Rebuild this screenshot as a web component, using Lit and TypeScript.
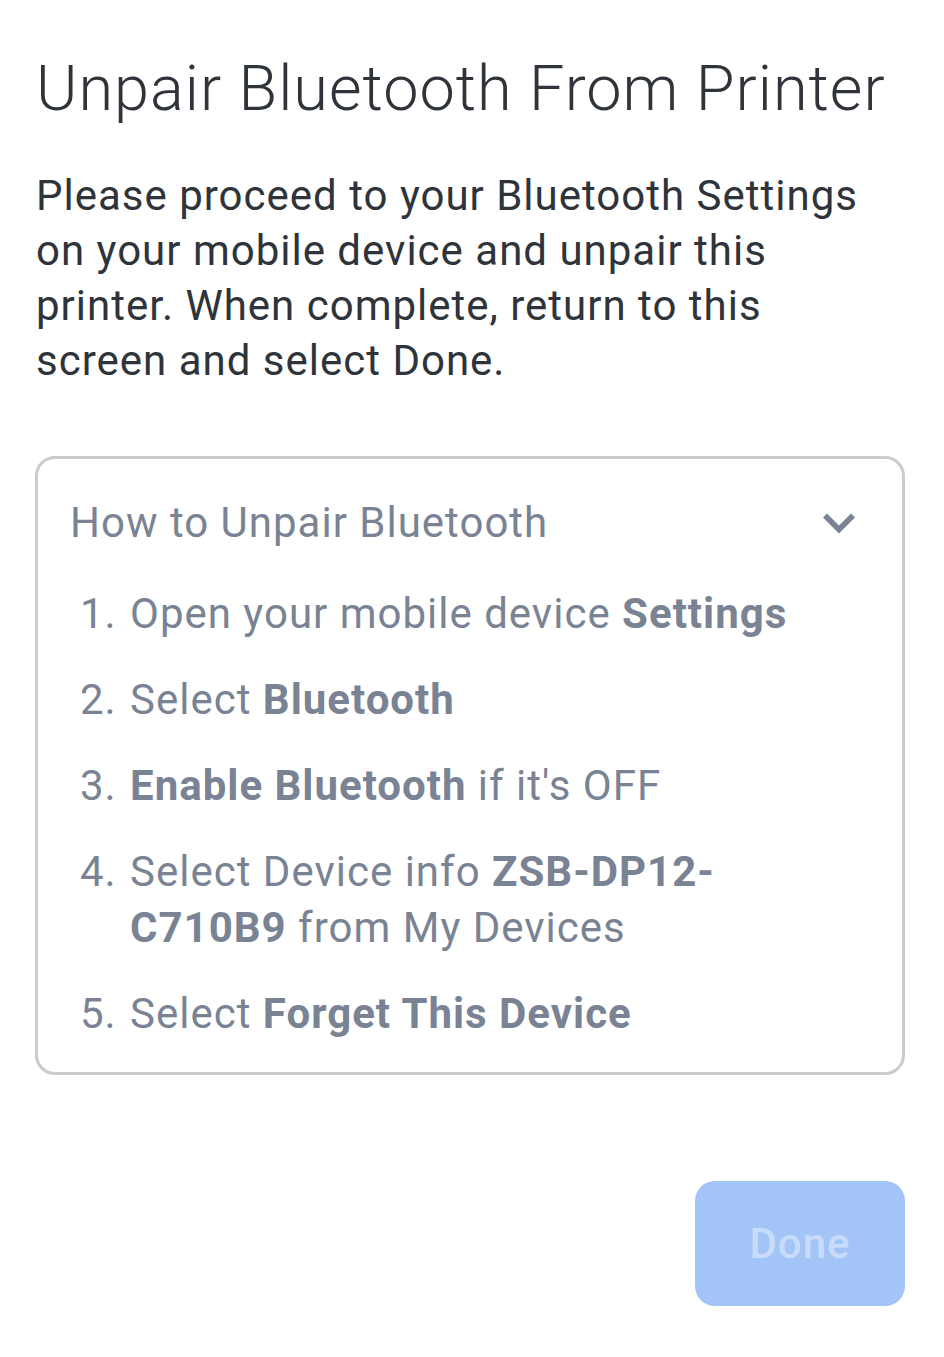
import { LitElement, html, css } from "lit";
import { customElement, state } from "lit/decorators.js";

@customElement("app-root")
export class AppRoot extends LitElement {
  @state() private open = true;

  static styles = css`
    :host {
      display: block;
      box-sizing: border-box;
      min-height: 100vh;
      padding: 56px 39px 50px 35px;
      background: #fff;
      color: #2f333a;
      font-family: Roboto, "Liberation Sans", sans-serif;
      font-size: 42px;
      line-height: 55px;
      letter-spacing: 1px;
    }
    h1 {
      margin: 0 0 46px;
      padding-left: 1px;
      font-size: 63px;
      line-height: 66px;
      font-weight: 300;
    }
    p {
      margin: 0 0 68px;
      padding: 0 16px 0 1px;
    }
    .card {
      border: 3px solid #c8cccf;
      border-radius: 20px;
      padding: 36px 32px 30px;
      color: #7a8394;
      line-height: 56px;
    }
    .toggle {
      display: flex;
      align-items: center;
      justify-content: space-between;
      width: 100%;
      padding: 0 13px 0 0;
      border: 0;
      background: none;
      color: inherit;
      font: inherit;
      letter-spacing: inherit;
      text-align: left;
    }
    .chevron {
      width: 36px;
      height: 24px;
      fill: none;
      stroke: currentColor;
      stroke-width: 5.6;
    }
    ol {
      display: flex;
      flex-direction: column;
      gap: 30px;
      margin: 35px 0 0;
      padding: 0 0 0 58px;
    }
    ol[hidden] {
      display: none;
    }
    li {
      padding-left: 2px;
    }
    b {
      font-weight: 700;
    }
    .actions {
      display: flex;
      justify-content: flex-end;
      margin-top: 106px;
    }
    .done {
      min-width: 210px;
      padding: 35px 54px;
      border: 0;
      border-radius: 20px;
      background: #a3c4f7;
      color: #c8dcfa;
      font: inherit;
      font-weight: 500;
      letter-spacing: inherit;
    }
  `;

  render() {
    return html`
      <main>
        <h1>Unpair Bluetooth From Printer</h1>
        <p>
          Please proceed to your Bluetooth Settings on your mobile device and
          unpair this printer. When complete, return to this screen and select
          Done.
        </p>
        <section class="card">
          <button
            class="toggle"
            aria-expanded=${this.open}
            @click=${() => (this.open = !this.open)}
          >
            <span>How to Unpair Bluetooth</span>
            <svg class="chevron" viewBox="0 0 36 24" aria-hidden="true">
              <path d="M4 4.5 18 18.5 32 4.5" />
            </svg>
          </button>
          <ol ?hidden=${!this.open}>
            <li>Open your mobile device <b>Settings</b></li>
            <li>Select <b>Bluetooth</b></li>
            <li><b>Enable Bluetooth</b> if it's OFF</li>
            <li>Select Device info <b>ZSB-DP12-C710B9</b> from My Devices</li>
            <li>Select <b>Forget This Device</b></li>
          </ol>
        </section>
        <div class="actions">
          <button class="done" disabled>Done</button>
        </div>
      </main>
    `;
  }
}
